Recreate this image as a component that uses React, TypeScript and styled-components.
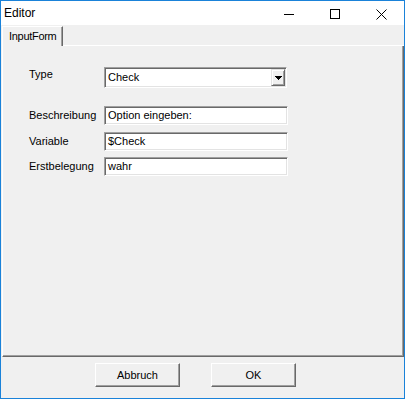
import React from "react";
import styled, { createGlobalStyle } from "styled-components";

const Global = createGlobalStyle`
  html, body { margin: 0; padding: 0; background: #ffffff; }
  * { box-sizing: border-box; }
`;

const Window = styled.div`
  width: 405px;
  height: 399px;
  border: 1px solid #1a82d9;
  display: flex;
  flex-direction: column;
  background: #f0f0f0;
  font-family: "Liberation Sans", Arial, sans-serif;
  color: #000;
`;

const TitleBar = styled.div`
  height: 24px;
  background: #ffffff;
  display: flex;
  align-items: center;
  flex: none;
`;

const Title = styled.div`
  flex: 1;
  padding-left: 3px;
  font-size: 12px;
  line-height: 24px;
`;

const CaptionButton = styled.div`
  width: 46px;
  height: 24px;
  display: flex;
  align-items: flex-start;
  justify-content: center;
  padding-top: 8px;
  svg { display: block; }
`;

const Client = styled.div`
  flex: 1;
  display: flex;
  flex-direction: column;
  background: #f0f0f0;
`;

const TabStrip = styled.div`
  height: 21px;
  display: flex;
  align-items: flex-end;
  padding-left: 1px;
  flex: none;
`;

const Tab = styled.div`
  width: 61px;
  height: 20px;
  border-top: 1px solid #ffffff;
  border-left: 1px solid #ffffff;
  border-right: 1px solid #696969;
  box-shadow: inset -1px 0 0 #a0a0a0;
  padding-left: 6px;
  font-size: 11px;
  line-height: 19px;
  letter-spacing: -0.3px;
  background: #f0f0f0;
`;

const StripRest = styled.div`
  flex: 1;
  height: 1px;
  background: #ffffff;
`;

const TabPanel = styled.div`
  height: 311px;
  margin-left: 1px;
  border-left: 1px solid #ffffff;
  border-right: 1px solid #696969;
  border-bottom: 1px solid #696969;
  box-shadow: inset -1px -1px 0 #a0a0a0;
  padding: 21px 0 0 26px;
  flex: none;
  display: flex;
  flex-direction: column;
`;

const Row = styled.div<{ $gap: number }>`
  display: flex;
  align-items: flex-start;
  margin-top: ${(p) => p.$gap}px;
`;

const Label = styled.div<{ $h: number; $pt?: number }>`
  width: 75px;
  font-size: 11px;
  line-height: ${(p) => p.$h}px;
  padding-top: ${(p) => p.$pt ?? 0}px;
  white-space: nowrap;
`;

const Sunken = styled.div`
  background: #ffffff;
  border-top: 1px solid #a0a0a0;
  border-left: 1px solid #a0a0a0;
  border-bottom: 1px solid #ffffff;
  border-right: 1px solid #ffffff;
  box-shadow: inset 1px 1px 0 #696969, inset -1px -1px 0 #e3e3e3;
`;

const Field = styled(Sunken)`
  width: 184px;
  height: 19px;
  padding: 1px 2px 0 3px;
  font-size: 11px;
  line-height: 15px;
  white-space: nowrap;
`;

const Select = styled(Sunken)`
  width: 183px;
  height: 21px;
  padding: 1px 1px 1px 3px;
  display: flex;
  align-items: stretch;
  font-size: 11px;
`;

const SelectText = styled.div`
  flex: 1;
  line-height: 17px;
`;

const DropButton = styled.div`
  width: 14px;
  height: 17px;
  background: #f0f0f0;
  border-top: 1px solid #e3e3e3;
  border-left: 1px solid #e3e3e3;
  border-right: 1px solid #696969;
  border-bottom: 1px solid #696969;
  box-shadow: inset 1px 1px 0 #ffffff, inset -1px -1px 0 #a0a0a0;
  display: flex;
  align-items: center;
  justify-content: center;
  svg { display: block; }
`;

const ButtonBar = styled.div`
  flex: 1;
  display: flex;
  align-items: flex-start;
  gap: 31px;
  padding: 6px 0 0 94px;
`;

const Button = styled.div`
  width: 85px;
  height: 24px;
  background: #f0f0f0;
  border-top: 1px solid #ffffff;
  border-left: 1px solid #ffffff;
  border-right: 1px solid #696969;
  border-bottom: 1px solid #696969;
  box-shadow: inset -1px -1px 0 #a0a0a0;
  text-align: center;
  font-size: 11px;
  line-height: 22px;
`;

const fields = [
  { label: "Beschreibung", value: "Option eingeben:", gap: 18 },
  { label: "Variable", value: "$Check", gap: 7 },
  { label: "Erstbelegung", value: "wahr", gap: 6 },
];

export default function App() {
  return (
    <>
      <Global />
      <Window>
        <TitleBar>
          <Title>Editor</Title>
          <CaptionButton>
            <svg width="10" height="10" viewBox="0 0 10 10" shapeRendering="crispEdges">
              <line x1="0" y1="5.5" x2="10" y2="5.5" stroke="#000" strokeWidth="1" />
            </svg>
          </CaptionButton>
          <CaptionButton>
            <svg width="10" height="10" viewBox="0 0 10 10" shapeRendering="crispEdges">
              <rect x="0.5" y="0.5" width="9" height="9" fill="none" stroke="#000" strokeWidth="1" />
            </svg>
          </CaptionButton>
          <CaptionButton>
            <svg width="11" height="11" viewBox="0 0 11 11">
              <path d="M0.5 0.5 L10.5 10.5 M10.5 0.5 L0.5 10.5" stroke="#000" strokeWidth="1" fill="none" />
            </svg>
          </CaptionButton>
        </TitleBar>
        <Client>
          <TabStrip>
            <Tab>InputForm</Tab>
            <StripRest />
          </TabStrip>
          <TabPanel>
            <Row $gap={0}>
              <Label $h={13} $pt={1}>Type</Label>
              <Select>
                <SelectText>Check</SelectText>
                <DropButton>
                  <svg width="7" height="4" viewBox="0 0 7 4" shapeRendering="crispEdges">
                    <path d="M0 0 H7 L3.5 4 Z" fill="#000" />
                  </svg>
                </DropButton>
              </Select>
            </Row>
            {fields.map((f) => (
              <Row key={f.label} $gap={f.gap}>
                <Label $h={19}>{f.label}</Label>
                <Field>{f.value}</Field>
              </Row>
            ))}
          </TabPanel>
          <ButtonBar>
            <Button>Abbruch</Button>
            <Button>OK</Button>
          </ButtonBar>
        </Client>
      </Window>
    </>
  );
}
